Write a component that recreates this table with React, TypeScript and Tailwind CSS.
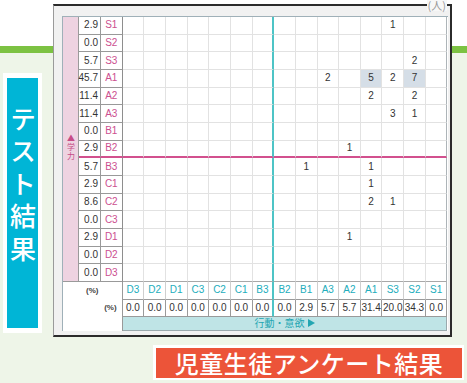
const ROWS = ["S1", "S2", "S3", "A1", "A2", "A3", "B1", "B2", "B3", "C1", "C2", "C3", "D1", "D2", "D3"];
const ROW_PCT = ["2.9", "0.0", "5.7", "45.7", "11.4", "11.4", "0.0", "2.9", "5.7", "2.9", "8.6", "0.0", "2.9", "0.0", "0.0"];
const COLS = ["D3", "D2", "D1", "C3", "C2", "C1", "B3", "B2", "B1", "A3", "A2", "A1", "S3", "S2", "S1"];
const COL_PCT = ["0.0", "0.0", "0.0", "0.0", "0.0", "0.0", "0.0", "0.0", "2.9", "5.7", "5.7", "31.4", "20.0", "34.3", "0.0"];

// row (学力) -> column (行動・意欲) -> count
const COUNTS: Record<string, Record<string, number>> = {
  S1: { S3: 1 },
  S3: { S2: 2 },
  A1: { A3: 2, A1: 5, S3: 2, S2: 7 },
  A2: { A1: 2, S2: 2 },
  A3: { S3: 3, S2: 1 },
  B2: { A2: 1 },
  B3: { B1: 1, A1: 1 },
  C1: { A1: 1 },
  C2: { A1: 2, S3: 1 },
  D1: { A2: 1 },
};
const HIGHLIGHT = ["A1:A1", "A1:S2"];

function GridCell({ r, c }: { r: number; c: number }) {
  const row = ROWS[r];
  const col = COLS[c];
  const v = COUNTS[row]?.[col];
  const hl = HIGHLIGHT.includes(`${row}:${col}`);
  const right =
    c === 6
      ? "border-r-2 border-r-[#4ec4c6]"
      : c === 14
      ? "border-r border-r-[#adb4b8]"
      : "border-r border-r-[#e2e2e2]";
  const bottom =
    r === 7
      ? "border-b-2 border-b-[#d2508e]"
      : r === 14
      ? "border-b border-b-[#a8a8a8]"
      : "border-b border-b-[#e2e2e2]";
  return (
    <div
      className={`flex items-center justify-center text-[10px] leading-none text-[#333] ${right} ${bottom} ${
        hl ? "bg-[#d5dee7]" : "bg-white"
      }`}
    >
      {v ?? ""}
    </div>
  );
}

function Matrix() {
  return (
    <div className="w-[386px] border-l border-t border-[#9fb0b8] bg-white grid grid-cols-[16px_22px_21.6px_repeat(15,21.67px)] grid-rows-[repeat(15,17.67px)_18px_17px_14px]">
      {ROWS.map((row, r) => (
        <div key={row} className="contents">
          {r === 0 && (
            <div className="row-span-15 bg-[#eed3e1] border-r border-b border-[#9a9a9a] flex flex-col items-center justify-center pb-[2px] text-[#c64c87] text-[8px] leading-[10px] font-['Noto_Sans_CJK_JP',sans-serif]">
              <span className="[writing-mode:vertical-rl] tracking-[1px]">▲学力</span>
            </div>
          )}
          <div
            className={`flex items-center justify-end pr-[2px] text-[10px] leading-none text-[#333] border-r border-r-[#999] ${
              r === 7 ? "border-b-2 border-b-[#d2508e]" : "border-b border-b-[#999]"
            }`}
          >
            {ROW_PCT[r]}
          </div>
          <div
            className={`flex items-center justify-center text-[10px] leading-none text-[#cc4f8f] border-r border-r-[#8e8e8e] ${
              r === 7 ? "border-b-2 border-b-[#d2508e]" : "border-b border-b-[#999]"
            }`}
          >
            {row}
          </div>
          {COLS.map((col, c) => (
            <GridCell key={col} r={r} c={c} />
          ))}
        </div>
      ))}

      <div className="col-span-3 row-span-3 border-r border-[#999] flex flex-col text-[8px] font-bold leading-none text-[#444]">
        <div className="h-[18px] flex items-center justify-center">(%)</div>
        <div className="h-[17px] flex items-center justify-end pr-[5px]">(%)</div>
      </div>

      {COLS.map((col, c) => (
        <div
          key={col}
          className={`flex items-center justify-center text-[10px] leading-none text-[#22adbc] border-b border-b-[#9a9a9a] ${
            c === 6 ? "border-r-2 border-r-[#4ec4c6]" : c === 14 ? "border-r border-r-[#adb4b8]" : "border-r border-r-[#cfcfcf]"
          }`}
        >
          {col}
        </div>
      ))}
      {COL_PCT.map((p, c) => (
        <div
          key={COLS[c]}
          className={`flex items-center justify-center text-[10px] leading-none text-[#333] border-b border-b-[#9a9a9a] ${
            c === 6 ? "border-r-2 border-r-[#4ec4c6]" : "border-r border-r-[#9a9a9a]"
          }`}
        >
          {p}
        </div>
      ))}
      <div className="col-span-15 bg-[#bfe4e6] border-r border-b border-[#9aa9ad] flex items-center justify-center gap-[3px] text-[10px] leading-none text-[#23a6b2] font-['Noto_Sans_CJK_JP',sans-serif]">
        <span>行動・意欲</span>
        <svg width="7" height="8" viewBox="0 0 7 8">
          <path d="M0 0 L7 4 L0 8 Z" fill="#23a6b2" />
        </svg>
      </div>
    </div>
  );
}

function Panel() {
  return (
    <div className="relative w-[399px] h-[333px] shrink-0 bg-[#f1f1f1] border-t-2 border-r-2 border-b-2 border-l border-[#2b2b2b] border-l-[#9a9a9a] pl-[8px] pt-[10px]">
      <span className="absolute right-[3px] top-[-6px] bg-[#f7f7f7] px-px text-[11px] leading-[11px] text-[#9a9a9a] font-['Noto_Sans_CJK_JP',sans-serif]">
        (人)
      </span>
      <Matrix />
    </div>
  );
}

export default function App() {
  return (
    <div className="w-[467px] h-[383px] overflow-hidden pt-[4px] bg-[linear-gradient(to_bottom,#ffffff_46px,#7cc242_46px,#7cc242_53px,#eef5e8_53px)] font-['Liberation_Sans','Noto_Sans_CJK_JP',sans-serif]">
      <div className="flex items-start">
        <div className="w-[53px] shrink-0 pl-[3px] pt-[69px]">
          <div className="w-[39px] h-[260px] bg-white px-[4px] py-[5px]">
            <div className="h-full bg-[#00b5d6] flex flex-col items-center pt-[28px] text-white text-[26px] font-medium font-['Noto_Sans_CJK_JP',sans-serif]">
              <span className="[writing-mode:vertical-rl] leading-[28px] tracking-[6.5px]">テスト結果</span>
            </div>
          </div>
        </div>
        <Panel />
      </div>
      <div className="ml-[153px] mt-[8px] w-[311px] h-[35px] border-white border-t-[3px] border-l-[3px] border-r-2 border-b-2 bg-[#ec5439] flex items-center justify-center text-white text-[24px] font-medium leading-none tracking-[0.5px] font-['Noto_Sans_CJK_JP',sans-serif]">
        児童生徒アンケート結果
      </div>
    </div>
  );
}
